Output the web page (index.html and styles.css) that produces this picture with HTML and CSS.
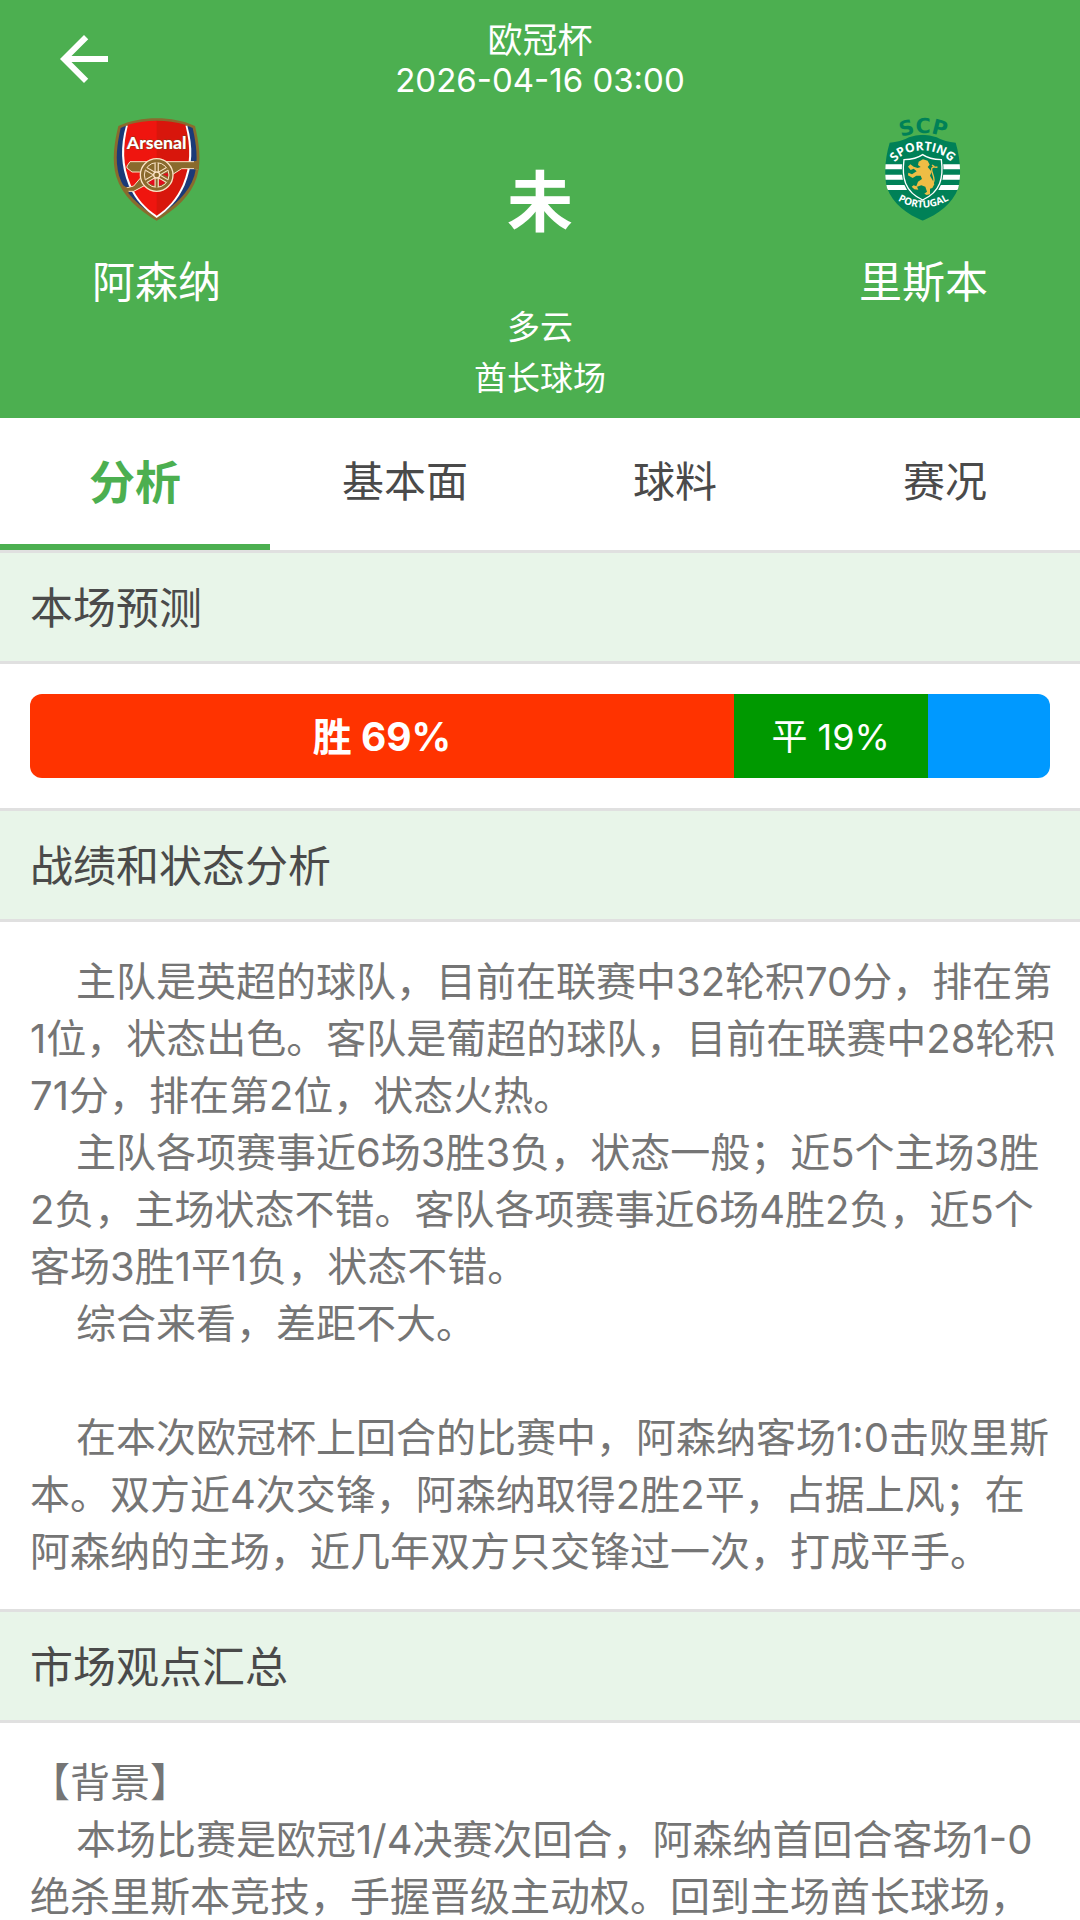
FILE: index.html
```html
<!DOCTYPE html>
<html lang="zh-CN">
<head>
<meta charset="utf-8">
<meta name="viewport" content="width=device-width, initial-scale=1">
<title>阿森纳 - 里斯本</title>
<link rel="stylesheet" href="styles.css">
</head>
<body>
<div class="app">
  <header class="match">
    <div class="topbar">
      <button class="back" type="button" aria-label="返回">
        <svg class="back-icon" viewBox="0 0 24 24" aria-hidden="true"><path fill="currentColor" d="M20 11H7.830l5.590-5.590L12 4l-8 8 8 8 1.410-1.410L7.830 13H20v-2z"/></svg>
      </button>
      <div class="event">
        <h1 class="league">欧冠杯</h1>
        <time class="kickoff" datetime="2026-04-16T03:00">2026-04-16 03:00</time>
      </div>
    </div>
    <div class="versus">
      <div class="team">
        <svg class="crest" viewBox="38 38 270 309" role="img" aria-label="阿森纳队徽">
          <path fill="#8a6a2d" d="M57 62C125 31 219 31 287 62 298 108 308 165 293 214 276 270 228 313 172 346 116 313 68 270 51 214 36 165 46 108 57 62Z"/>
          <path fill="#1b3a78" d="M64 68Q72 64 82 61L262 61Q272 64 280 68C290 112 298 165 285 211 269 262 224 303 172 335 120 303 75 262 59 211 46 165 54 112 64 68Z"/>
          <path fill="#fff" d="M80 61C62 125 64 180 88 240 108 285 135 313 172 338 209 313 236 285 256 240 280 180 282 125 264 61Z"/>
          <path fill="#ef150f" d="M86 58Q128 46 173 46V331C138 308 113 280 94 238 70 180 69 125 86 58Z"/>
          <path fill="#d8160c" d="M258 58Q216 46 172 46V331C206 308 231 280 250 238 274 180 275 125 258 58Z"/>
          <path fill="#8a6a2d" stroke="#fbe3c6" stroke-width="3" d="M83 182 92 169H296V190H247L222 206 120 200H98L83 188ZM80 248 103 242 126 215 137 240 103 258 84 258Z"/>
          <path fill="#8a6a2d" d="M284 167h15v25h-15zM71 240l14 8 4 14-13-4z"/>
          <circle cx="172" cy="209" r="49" fill="#8a6a2d" stroke="#fbe3c6" stroke-width="4"/>
          <path fill="#e20c1c" d="M167 224V242L148 234 157 219ZM178 224V242L197 234 188 219ZM190 207 205 202 207 215Z"/>
          <circle cx="172" cy="209" r="37" fill="none" stroke="#fbe3c6" stroke-width="3"/>
          <path stroke="#fbe3c6" stroke-width="13" d="M172 173V245M141 191 203 227M203 191 141 227"/>
          <path stroke="#8a6a2d" stroke-width="6" d="M172 171V247M139 190 205 228M205 190 139 228"/>
          <circle cx="172" cy="209" r="9" fill="#8a6a2d" stroke="#fbe3c6" stroke-width="4"/>
          <text class="arsenal-name" x="172" y="132">Arsenal</text>
        </svg>
        <h2 class="team-name">阿森纳</h2>
      </div>
      <div class="status">
        <strong class="score">未</strong>
        <p class="venue">多云</p>
        <p class="venue">酋长球场</p>
      </div>
      <div class="team">
        <svg class="crest" viewBox="38 38 270 309" role="img" aria-label="里斯本队徽">
          <defs>
            <clipPath id="shield"><path d="M73 112Q105 111 131 96 172 80 214 96 240 111 271 112C284 155 289 205 279 248 261 296 218 327 172 346 126 327 83 296 65 248 55 205 60 155 73 112Z"/></clipPath>
            <path id="arc-scp" d="M88 104Q172 62 260 104"/>
            <path id="arc-top" d="M82 182C112 120 232 120 263 182"/>
            <path id="arc-bottom" d="M80 274Q172 340 268 273"/>
          </defs>
          <g clip-path="url(#shield)">
            <path fill="#008157" d="M50 80h245v270H50z"/>
            <path fill="#fff" d="M50 177h245v15H50zM50 208h245v15H50zM50 239h245v15H50z"/>
          </g>
          <path fill="#008157" stroke="#008157" stroke-width="9" d="M172 148Q194 163 228 164C235 218 226 262 172 286 118 262 109 218 116 164Q150 163 172 148Z"/>
          <path fill="#008157" stroke="#fff" stroke-width="4" d="M172 148Q192 162 228 163C235 217 226 260 172 284 118 260 109 217 116 163Q152 162 172 148Z"/>
          <path fill="#efbd45" d="M160 169 173 162 187 166 193 178 187 185 199 199 194 211 202 225 207 237 201 248 194 250 194 267 184 269 177 265 185 259 180 244 168 240 155 244 159 253 147 252 139 244 145 240 153 243 158 229 170 221 166 211 153 211 142 218 128 210 129 202 140 207 154 198 145 190 136 194 128 184 135 177 145 184 157 188 166 185 158 179Z"/>
          <path fill="none" stroke="#efbd45" stroke-width="4" d="M202 235C215 219 196 204 199 190 202 179 213 190 216 184M207 184l-7-5"/>
          <text class="sporting-initials"><textPath href="#arc-scp" startOffset="50%">SCP</textPath></text>
          <text class="sporting-top"><textPath href="#arc-top" startOffset="50%">SPORTING</textPath></text>
          <text class="sporting-bottom"><textPath href="#arc-bottom" startOffset="50%">PORTUGAL</textPath></text>
        </svg>
        <h2 class="team-name">里斯本</h2>
      </div>
    </div>
  </header>

  <nav class="tabs" role="tablist">
    <button class="tab tab-active" type="button" role="tab" aria-selected="true">分析</button>
    <button class="tab" type="button" role="tab" aria-selected="false">基本面</button>
    <button class="tab" type="button" role="tab" aria-selected="false">球料</button>
    <button class="tab" type="button" role="tab" aria-selected="false">赛况</button>
  </nav>

  <main class="content">
    <section>
      <h2 class="section-title">本场预测</h2>
      <div class="forecast">
        <div class="bar">
          <div class="segment win" style="width: 69%">胜 69%</div>
          <div class="segment draw" style="width: 19%">平 19%</div>
          <div class="segment loss" style="width: 12%"></div>
        </div>
      </div>
    </section>

    <section>
      <h2 class="section-title">战绩和状态分析</h2>
      <div class="article">
        <p class="indent">主队是英超的球队，目前在联赛中32轮积70分，排在第1位，状态出色。客队是葡超的球队，目前在联赛中28轮积71分，排在第2位，状态火热。</p>
        <p class="indent">主队各项赛事近6场3胜3负，状态一般；近5个主场3胜2负，主场状态不错。客队各项赛事近6场4胜2负，近5个客场3胜1平1负，状态不错。</p>
        <p class="indent">综合来看，差距不大。</p>
        <br>
        <p class="indent">在本次欧冠杯上回合的比赛中，阿森纳客场1:0击败里斯本。双方近4次交锋，阿森纳取得2胜2平，占据上风；在阿森纳的主场，近几年双方只交锋过一次，打成平手。</p>
      </div>
    </section>

    <section>
      <h2 class="section-title">市场观点汇总</h2>
      <div class="article">
        <p>【背景】</p>
        <p class="indent">本场比赛是欧冠1/4决赛次回合，阿森纳首回合客场1-0绝杀里斯本竞技，手握晋级主动权。回到主场酋长球场，</p>
      </div>
    </section>
  </main>
</div>
</body>
</html>
```
FILE: styles.css
```css
* {
  box-sizing: border-box;
}

body,
h1,
h2,
p {
  margin: 0;
  font-weight: 400;
}

body {
  background: #fff;
  color: #757575;
  font-family: Inter, "Noto Sans CJK SC", sans-serif;
  font-size: 40px;
}

button {
  padding: 0;
  border: 0;
  background: none;
  color: inherit;
  font: inherit;
}

.app {
  display: flex;
  flex-direction: column;
  height: 100vh;
}

/* Match header */
.match {
  flex: none;
  padding: 18px 0 14px;
  background: #4caf50;
  color: #fff;
}

.topbar,
.versus {
  display: grid;
  grid-template-columns: 29% 1fr 29%;
}

.topbar {
  align-items: center;
  margin-bottom: 18px;
}

.back {
  justify-self: start;
  margin-left: 48px;
}

.back-icon {
  display: block;
  width: 72px;
  height: 72px;
}

.event {
  display: flex;
  flex-direction: column;
  padding-top: 2px;
  text-align: center;
}

.league {
  font-size: 35px;
  line-height: 40px;
}

.kickoff {
  font-size: 33px;
  line-height: 40px;
}

.team,
.status {
  display: flex;
  flex-direction: column;
  align-items: center;
}

.crest {
  width: 90px;
  height: 103px;
  overflow: visible;
}

.arsenal-name {
  fill: #fff;
  stroke: #8a3a1c;
  stroke-width: 3px;
  paint-order: stroke;
  font: 900 53px Lato, sans-serif;
  text-anchor: middle;
}

.sporting-initials {
  fill: #008157;
  font: 700 62px "DejaVu Sans", sans-serif;
  text-anchor: middle;
}

.sporting-top,
.sporting-bottom {
  fill: #fff;
  font: 700 37px "Open Sans", sans-serif;
  text-anchor: middle;
}

.sporting-bottom {
  font-size: 30px;
}

.team-name {
  margin-top: 31px;
  font-size: 43px;
  line-height: 60px;
}

.score {
  margin-bottom: 16px;
  font-size: 66px;
  line-height: 168px;
}

.venue {
  font-size: 33px;
  line-height: 51px;
}

/* Tabs */
.tabs {
  display: grid;
  flex: none;
  grid-template-columns: repeat(4, 1fr);
}

.tab {
  padding: 34px 0 32px;
  border-bottom: 6px solid transparent;
  color: #4a4a4a;
  font-size: 42px;
  line-height: 60px;
}

.tab-active {
  border-color: #4caf50;
  color: #4caf50;
  font-size: 46px;
  font-weight: 700;
}

/* Sections */
.content {
  flex: 1;
  min-height: 0;
  overflow-y: auto;
  scrollbar-width: none;
}

.section-title {
  padding: 25px 30px 23px;
  border: solid #e0e0e0;
  border-width: 3px 0;
  background: #e8f5e9;
  color: #4a4a4a;
  font-size: 43px;
  line-height: 60px;
}

.forecast {
  padding: 30px;
}

.bar {
  display: flex;
  overflow: hidden;
  border-radius: 12px;
}

.segment {
  height: 84px;
  padding-top: 2px;
  color: #fff;
  font-size: 36px;
  line-height: 82px;
  text-align: center;
  white-space: nowrap;
}

.win {
  background: #ff3300;
  font-size: 39px;
  font-weight: 700;
}

.draw {
  background: #009900;
}

.loss {
  background: #0099ff;
}

.article {
  padding: 31px 20px 29px 30px;
  line-height: 57px;
}

.indent {
  text-indent: 46px;
}
```
